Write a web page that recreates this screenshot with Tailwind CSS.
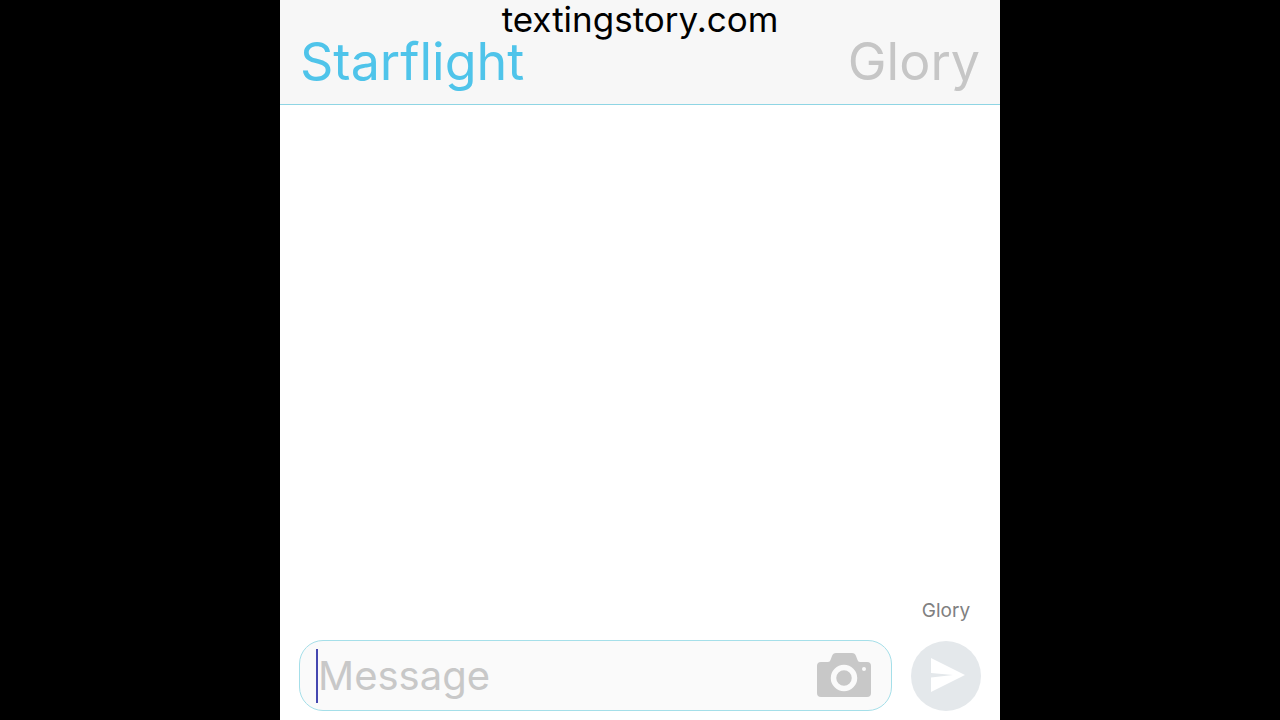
<!DOCTYPE html>
<html lang="en">
<head>
    <meta charset="UTF-8">
    <meta name="viewport" content="width=device-width, initial-scale=1.0">
    <title>Texting Story</title>
    <script src="https://cdn.jsdelivr.net/npm/@tailwindcss/browser@4"></script>
</head>
<body class="bg-black font-['Inter',sans-serif]">
    <div class="flex flex-col w-full max-w-180 min-h-screen mx-auto bg-white">
        <header class="relative flex justify-between px-5 pt-[30px] pb-[10px] bg-[#f7f7f7] border-b border-[#8fd5e4]">
            <p class="absolute inset-x-0 top-0 text-center text-[35px] leading-[38px] text-black">textingstory.com</p>
            <button type="button" class="text-[52px] leading-16 text-[#4fc4ea]">Starflight</button>
            <button type="button" class="text-[52px] leading-16 text-[#c6c6c6]">Glory</button>
        </header>

        <main class="flex-1"></main>

        <form class="flex items-end gap-[19px] px-[19px] pb-[9px]">
            <div class="flex flex-1 min-w-0 items-center h-[71px] pl-4 pr-[19px] bg-[#fafafa] border border-[#a5dfe9] rounded-3xl">
                <span class="w-0.5 h-[54px] bg-[#4548b0]"></span>
                <input id="message" type="text" aria-label="Message" placeholder="Message" class="flex-1 min-w-0 h-14 text-[40px] text-black placeholder:text-[#c8c8c8] outline-none">
                <button type="button" aria-label="Add photo">
                    <svg class="w-14 h-12" viewBox="0 0 56 48" fill="none">
                        <path d="M5 10h7q2 0 2.500-2l1.500-4q1-3 4-3h16q3 0 4 3l1.500 4q.5 2 2.500 2h7q4 0 4 4v27q0 4-4 4H5q-4 0-4-4V14q0-4 4-4Z" fill="#c8c8c8"/>
                        <circle cx="28" cy="26" r="10.500" stroke="#fafafa" stroke-width="5.500"/>
                        <circle cx="48" cy="17" r="2" fill="#fafafa"/>
                    </svg>
                </button>
            </div>
            <div class="flex flex-col items-center gap-4">
                <label for="send" class="text-[19px] leading-7 text-[#808080]">Glory</label>
                <button id="send" type="button" aria-label="Send" class="rounded-full">
                    <svg class="size-[70px]" viewBox="0 0 70 70">
                        <circle cx="35" cy="35" r="35" fill="#e4e8eb"/>
                        <path d="M20 17 54 34 20 51V36.500L42 34 20 32Z" fill="#fff"/>
                    </svg>
                </button>
            </div>
        </form>
    </div>
</body>
</html>
